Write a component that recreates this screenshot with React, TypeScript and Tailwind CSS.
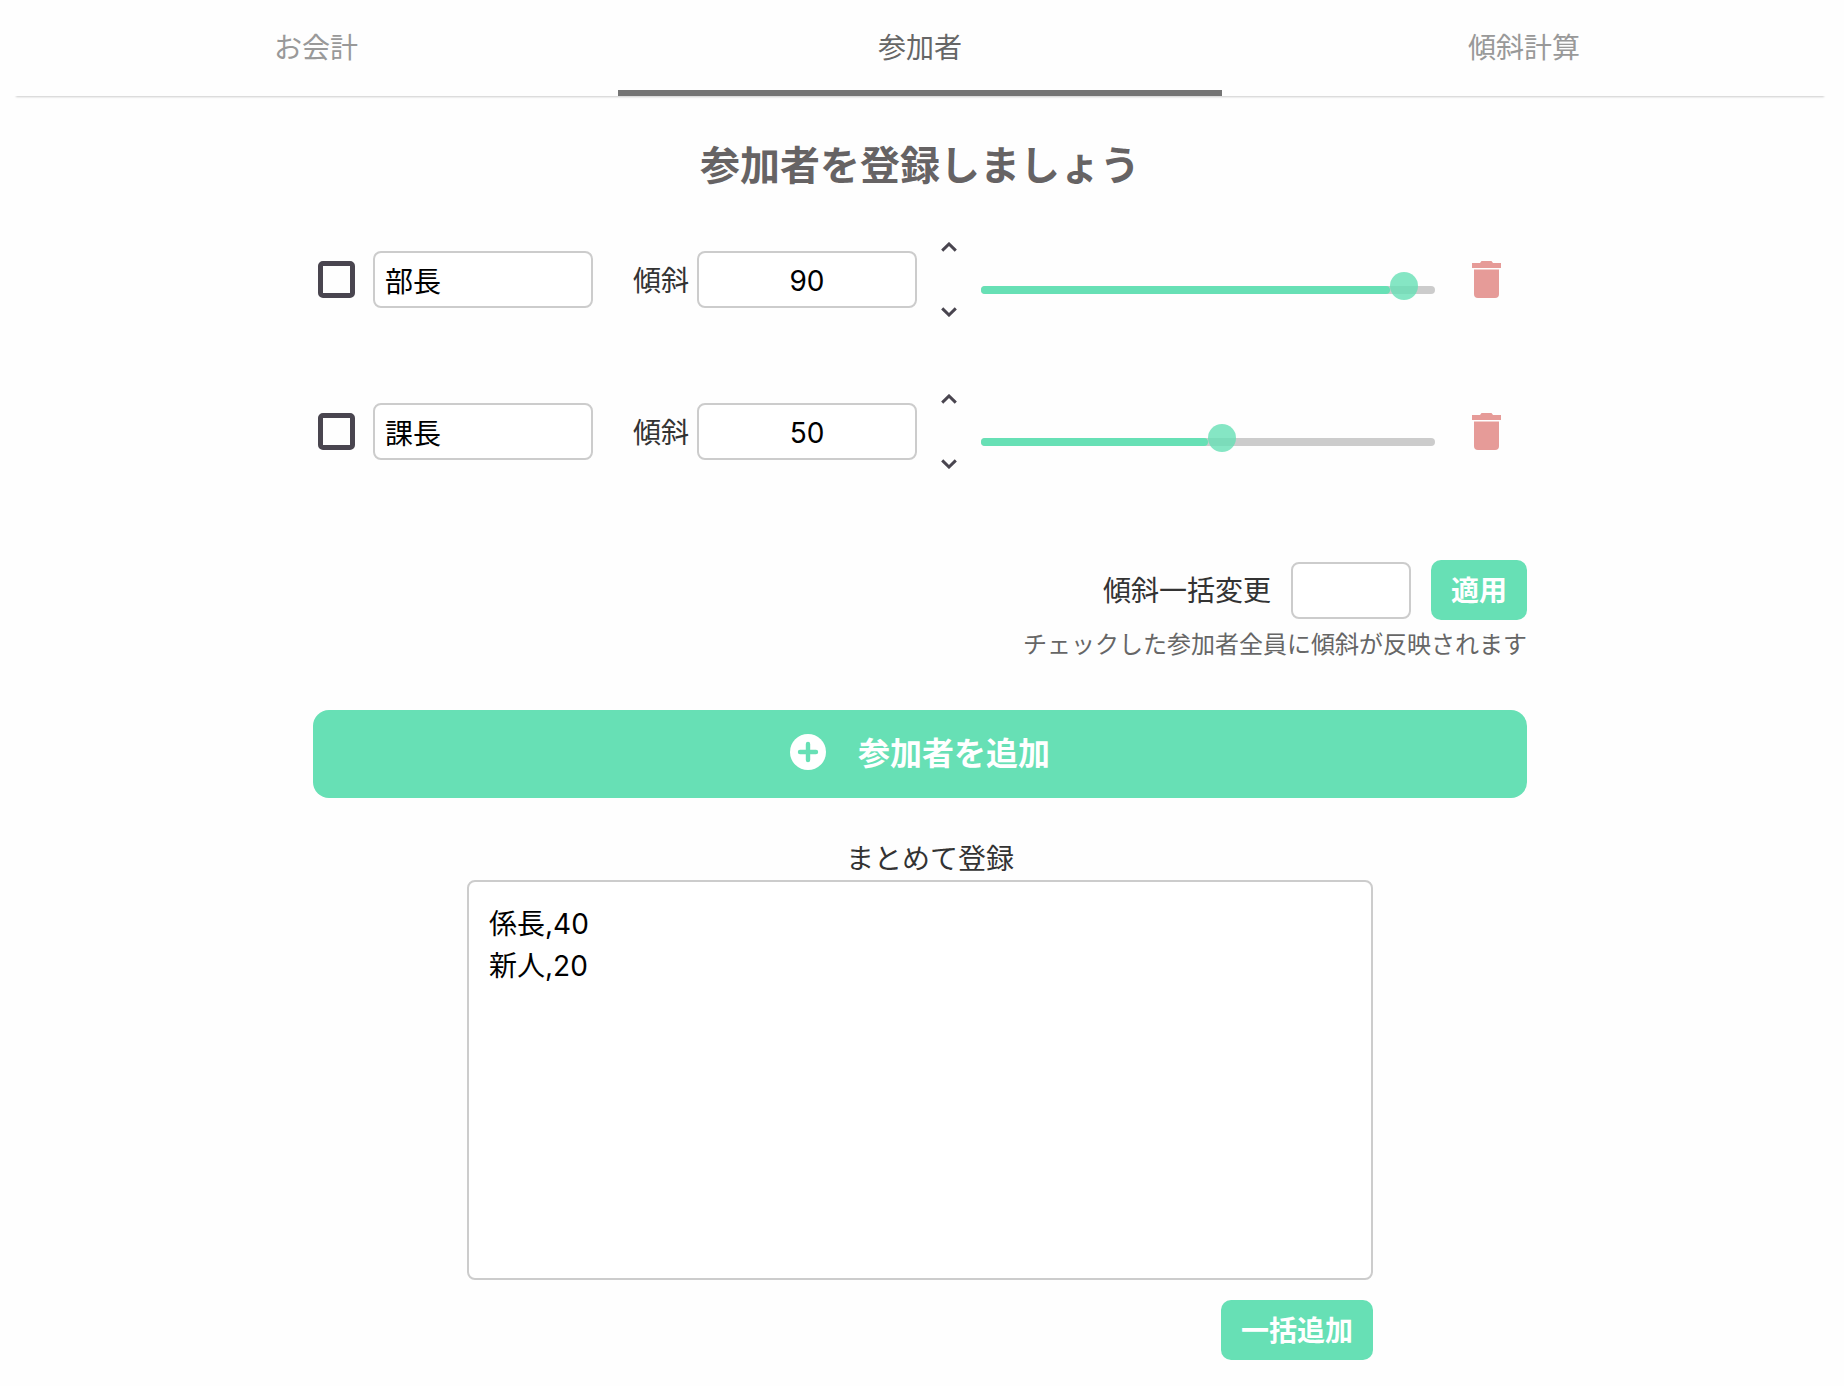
import React, { useState } from 'react';
import { clsx } from 'clsx';

interface Participant {
  id: number;
  name: string;
  slope: number;
  checked: boolean;
}

const TABS = ['お会計', '参加者', '傾斜計算'];

const FIELD = 'h-[57px] min-w-0 rounded-lg border-2 border-[#ccc] bg-white text-[28px] text-black outline-none';
const ACTION = 'h-[60px] rounded-[10px] bg-[#67e0b5] pt-0.5 text-[28px] font-bold text-white';

function Chevron({ down = false }: { down?: boolean }) {
  return (
    <svg viewBox="0 0 16 10" className="h-[10px] w-4" fill="none" stroke="#49454f" strokeWidth="3">
      <path d={down ? 'M1.2 1.4 8 8l6.8-6.6' : 'M1.2 8.6 8 2l6.8 6.6'} />
    </svg>
  );
}

function TrashIcon() {
  return (
    <svg viewBox="0 0 29 37" className="h-[37px] w-[29px]" fill="#e69b98">
      <path d="M0 2h8l1.5-2h10L21 2h8v5H0z" />
      <path d="M2 8.500h25V33a4 4 0 0 1-4 4H6a4 4 0 0 1-4-4z" />
    </svg>
  );
}

function PlusCircleIcon() {
  return (
    <svg viewBox="0 0 36 36" className="mb-1 size-9">
      <circle cx="18" cy="18" r="18" fill="#fff" />
      <path d="M18 10v16M10 18h16" stroke="#67e0b5" strokeWidth="4.4" strokeLinecap="round" />
    </svg>
  );
}

interface SlopeSliderProps {
  value: number;
  label: string;
  onChange: (value: number) => void;
}

function SlopeSlider({ value, label, onChange }: SlopeSliderProps) {
  return (
    <div className="relative mt-5 h-2 flex-1 rounded-full bg-[#ccc]">
      <div className="h-2 rounded-full bg-[#67e0b5]" style={{ width: `${value}%` }} />
      <div
        className="absolute -top-[14px] size-7 rounded-full bg-[#67e0b5] opacity-80"
        style={{ left: `${value}%` }}
      />
      <input
        type="range"
        min={0}
        max={100}
        value={value}
        aria-label={label}
        onChange={(e) => onChange(Number(e.target.value))}
        className="absolute -top-[14px] left-0 h-7 w-full cursor-pointer opacity-0"
      />
    </div>
  );
}

interface ParticipantRowProps {
  participant: Participant;
  onChange: (patch: Partial<Participant>) => void;
  onRemove: () => void;
}

function ParticipantRow({ participant, onChange, onRemove }: ParticipantRowProps) {
  const { id, name, slope, checked } = participant;
  const setSlope = (value: number) => onChange({ slope: Math.min(100, Math.max(0, value)) });

  return (
    <li className="flex h-[75px] items-center pr-[26px] pl-[5px]">
      <input
        type="checkbox"
        checked={checked}
        aria-label={`${name}を選択`}
        onChange={(e) => onChange({ checked: e.target.checked })}
        className="size-[37px] shrink-0 appearance-none rounded-[5px] border-[5px] border-[#49454f] checked:bg-[#49454f]"
      />
      <input
        type="text"
        value={name}
        aria-label="名前"
        onChange={(e) => onChange({ name: e.target.value })}
        className={clsx(FIELD, 'ml-[18px] w-[220px] px-[10px]')}
      />
      <label htmlFor={`slope-${id}`} className="ml-10 shrink-0 pt-0.5">
        傾斜
      </label>
      <input
        id={`slope-${id}`}
        type="text"
        inputMode="numeric"
        value={slope}
        onChange={(e) => setSlope(Number(e.target.value) || 0)}
        className={clsx(FIELD, 'ml-2 w-[220px] pt-0.5 text-center')}
      />
      <div className="ml-6 flex h-full flex-col justify-between">
        <button type="button" aria-label="増やす" onClick={() => setSlope(slope + 1)}>
          <Chevron />
        </button>
        <button type="button" aria-label="減らす" onClick={() => setSlope(slope - 1)}>
          <Chevron down />
        </button>
      </div>
      <div className="ml-6 flex flex-1">
        <SlopeSlider value={slope} label={`${name}の傾斜`} onChange={setSlope} />
      </div>
      <button type="button" aria-label="削除" className="ml-[37px]" onClick={onRemove}>
        <TrashIcon />
      </button>
    </li>
  );
}

export default function App() {
  const [activeTab, setActiveTab] = useState(1);
  const [bulkSlope, setBulkSlope] = useState('');
  const [bulkText, setBulkText] = useState('係長,40\n新人,20');
  const [participants, setParticipants] = useState<Participant[]>([
    { id: 1, name: '部長', slope: 90, checked: false },
    { id: 2, name: '課長', slope: 50, checked: false },
  ]);

  const update = (id: number, patch: Partial<Participant>) =>
    setParticipants((list) => list.map((p) => (p.id === id ? { ...p, ...patch } : p)));

  const remove = (id: number) => setParticipants((list) => list.filter((p) => p.id !== id));

  const add = (items: Array<{ name: string; slope: number }>) =>
    setParticipants((list) => [
      ...list,
      ...items.map((item, i) => ({ ...item, id: Date.now() + i, checked: false })),
    ]);

  const applyBulkSlope = () => {
    const slope = Math.min(100, Math.max(0, Number(bulkSlope) || 0));
    setParticipants((list) => list.map((p) => (p.checked ? { ...p, slope } : p)));
  };

  const addBulk = () => {
    const lines = bulkText.split('\n').filter((line) => line.trim() !== '');
    add(
      lines.map((line) => {
        const [name, slope] = line.split(',');
        return { name, slope: Number(slope) || 0 };
      })
    );
    setBulkText('');
  };

  return (
    <div
      lang="ja"
      className="min-h-screen bg-[#fefefe] pr-[18px] pb-6 pl-[14px] font-['Inter','Noto_Sans_CJK_JP',sans-serif] text-[28px] leading-[42px] text-[#333]"
    >
      <nav role="tablist" className="grid h-24 grid-cols-3 shadow-[0_3px_2px_-2px_rgba(0,0,0,0.2)]">
        {TABS.map((tab, i) => (
          <button
            key={tab}
            type="button"
            role="tab"
            aria-selected={i === activeTab}
            onClick={() => setActiveTab(i)}
            className={clsx(
              'border-b-[6px] pt-1.5',
              i === activeTab ? 'border-[#757575] text-[#666]' : 'border-transparent text-[#999]'
            )}
          >
            {tab}
          </button>
        ))}
      </nav>

      <main className="mx-auto w-[67%]">
        <h1 className="mt-10 text-center text-[40px] leading-[60px] font-bold text-[#666364]">
          参加者を登録しましょう
        </h1>

        <ul className="mt-[46px] flex flex-col gap-[77px]">
          {participants.map((p) => (
            <ParticipantRow
              key={p.id}
              participant={p}
              onChange={(patch) => update(p.id, patch)}
              onRemove={() => remove(p.id)}
            />
          ))}
        </ul>

        <div className="mt-[91px] flex items-center justify-end gap-5">
          <label htmlFor="bulk-slope" className="pt-0.5">
            傾斜一括変更
          </label>
          <input
            id="bulk-slope"
            type="text"
            inputMode="numeric"
            value={bulkSlope}
            onChange={(e) => setBulkSlope(e.target.value)}
            className={clsx(FIELD, 'w-[120px] text-center')}
          />
          <button type="button" className={clsx(ACTION, 'px-5')} onClick={applyBulkSlope}>
            適用
          </button>
        </div>
        <p className="mt-[7px] text-right text-2xl leading-9 text-[#666]">
          チェックした参加者全員に傾斜が反映されます
        </p>

        <button
          type="button"
          onClick={() => add([{ name: '', slope: 50 }])}
          className="mt-[47px] flex h-[88px] w-full items-center justify-center gap-8 rounded-2xl bg-[#67e0b5] text-[32px] font-bold text-white"
        >
          <PlusCircleIcon />
          参加者を追加
        </button>
      </main>

      <section className="mx-auto mt-[41px] flex w-1/2 flex-col">
        <label htmlFor="bulk-text" className="pl-5 text-center leading-[41px]">
          まとめて登録
        </label>
        <textarea
          id="bulk-text"
          value={bulkText}
          onChange={(e) => setBulkText(e.target.value)}
          className="h-[400px] w-full resize-none rounded-lg border-2 border-[#ccc] bg-white px-5 pt-[21px] pb-5 text-[28px] leading-[42px] text-black outline-none"
        />
        <button type="button" className={clsx(ACTION, 'mt-5 self-end px-5')} onClick={addBulk}>
          一括追加
        </button>
      </section>
    </div>
  );
}
